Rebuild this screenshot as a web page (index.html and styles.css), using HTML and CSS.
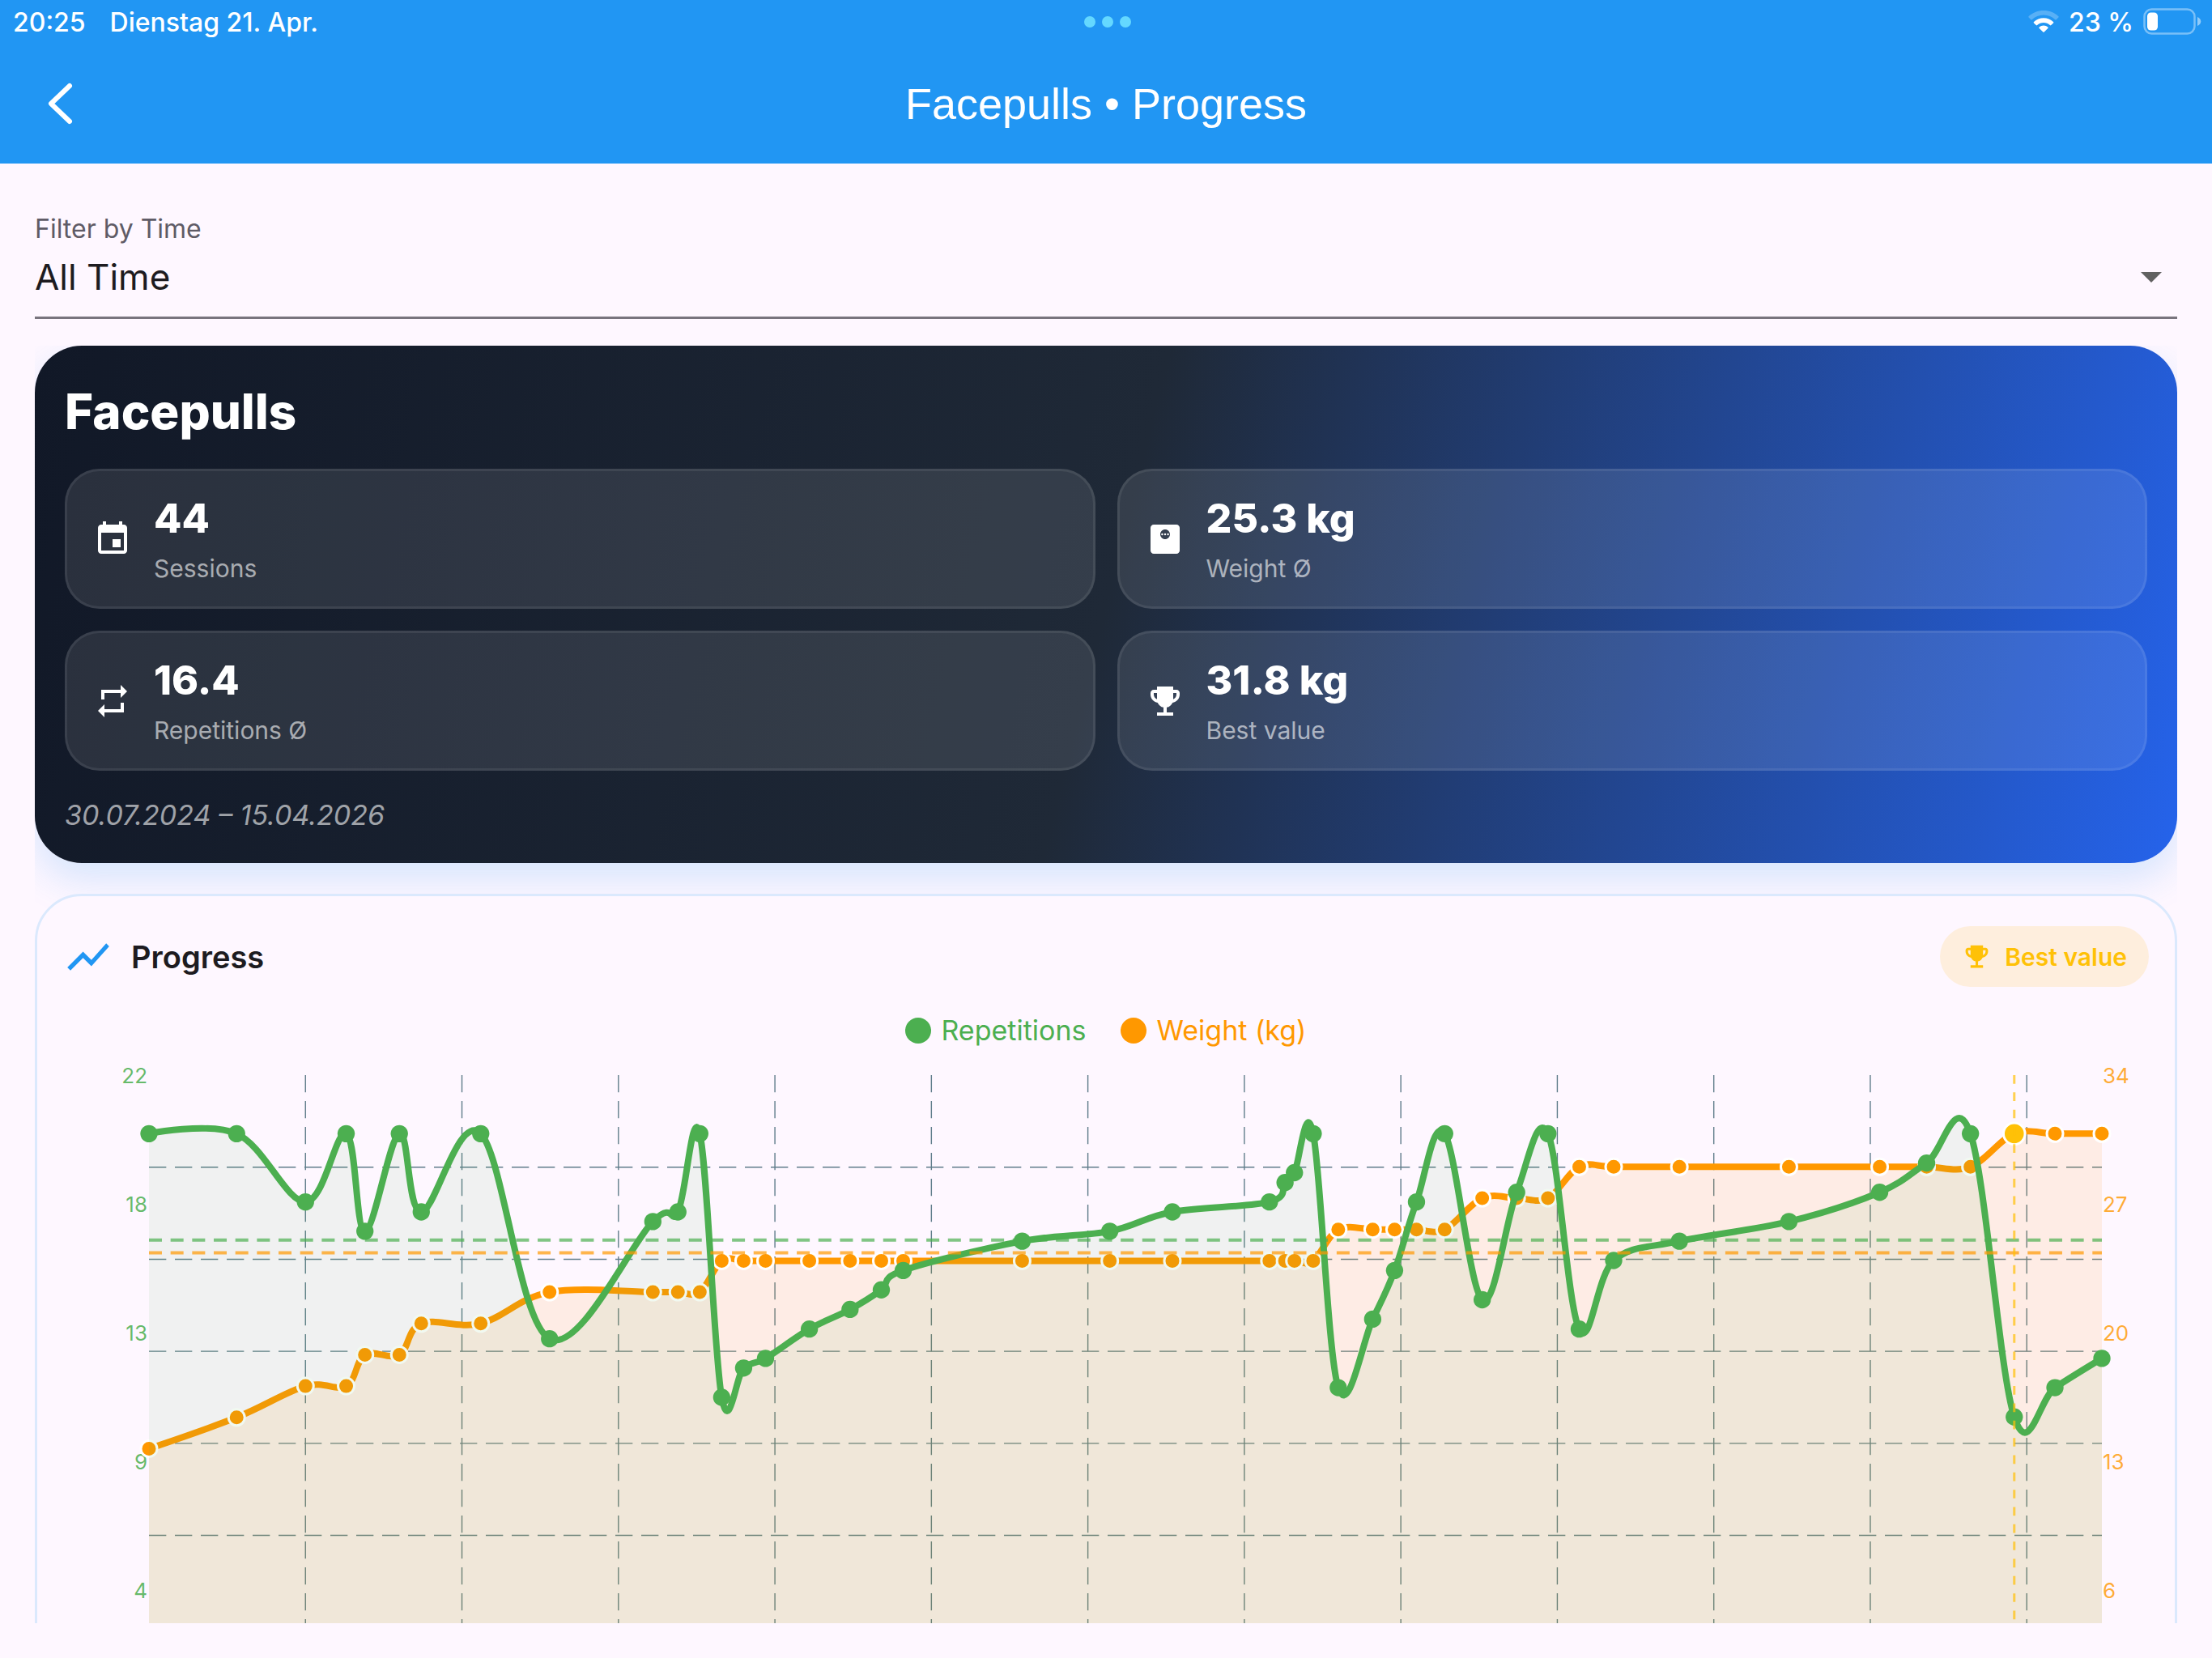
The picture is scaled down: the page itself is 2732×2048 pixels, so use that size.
FILE: index.html
```html
<!DOCTYPE html>
<html lang="en">
<head>
  <meta charset="UTF-8">
  <meta name="viewport" content="width=device-width, initial-scale=1.0">
  <title>Facepulls • Progress</title>
  <link rel="stylesheet" href="styles.css">
</head>
<body>
  <header class="top-bar">
    <div class="status-bar">
      <div class="status-left">
        <span>20:25</span>
        <span lang="de">Dienstag 21. Apr.</span>
      </div>
      <div class="status-dots">
        <i></i><i></i><i></i>
      </div>
      <div class="status-right">
        <svg width="38" height="28" viewBox="0 0 38 28" fill="#fff">
          <path opacity=".25" d="M19 0C11.800 0 5.300 2.700 .700 7.100a1 1 0 0 0 0 1.500l2.600 2.600a1 1 0 0 0 1.400 0C8.500 7.700 13.500 5.600 19 5.600s10.500 2.100 14.300 5.600a1 1 0 0 0 1.400 0l2.600-2.600a1 1 0 0 0 0-1.500C32.700 2.700 26.200 0 19 0z"/>
          <path d="M19 9.200c-4.600 0-8.800 1.800-12 4.700a1 1 0 0 0 0 1.500l2.700 2.700a1 1 0 0 0 1.400 0c2.100-1.900 4.900-3 7.900-3s5.800 1.100 7.900 3a1 1 0 0 0 1.400 0l2.700-2.700a1 1 0 0 0 0-1.500c-3.200-2.900-7.400-4.700-12-4.700z"/>
          <path d="M19 18.400c-2 0-3.900.8-5.300 2a1 1 0 0 0 0 1.500l4.600 4.600a1 1 0 0 0 1.400 0l4.600-4.600a1 1 0 0 0 0-1.500c-1.400-1.200-3.300-2-5.300-2z"/>
        </svg>
        <span>23 %</span>
        <svg width="72" height="34" viewBox="0 0 72 34">
          <rect x="1.500" y="1.500" width="62" height="30" rx="9" fill="none" stroke="#fff" stroke-opacity=".4" stroke-width="2.500"/>
          <rect x="5" y="5.500" width="13" height="22" rx="4.500" fill="#fff"/>
          <path d="M67 11c2.500 1 4.300 3 4.300 5.500S69.500 21 67 22z" fill="#fff" fill-opacity=".5"/>
        </svg>
      </div>
    </div>
    <nav class="nav-bar">
      <button class="back-btn" aria-label="Back">
        <svg width="36" height="56" viewBox="0 0 36 56" fill="none" stroke="#fff" stroke-width="6" stroke-linecap="round" stroke-linejoin="round">
          <polyline points="30 6 7 28 30 50"/>
        </svg>
      </button>
      <h1>Facepulls • Progress</h1>
    </nav>
  </header>

  <main>
    <div class="filter">
      <label for="timeFilter">Filter by Time</label>
      <select id="timeFilter">
        <option>All Time</option>
      </select>
      <svg class="filter-arrow" width="26" height="13" viewBox="0 0 26 13"><path d="M0 0h26L13 13z" fill="#616161"/></svg>
    </div>

    <div class="scroller">
      <section class="summary">
        <h2>Facepulls</h2>
        <div class="stats">
          <div class="stat">
            <svg width="48" height="48" viewBox="0 0 24 24" fill="currentColor"><path d="M17 12h-5v5h5v-5zM16 1v2H8V1H6v2H5c-1.110 0-1.990.9-1.990 2L3 19c0 1.100.890 2 2 2h14c1.100 0 2-.9 2-2V5c0-1.100-.9-2-2-2h-1V1h-2zm3 18H5V8h14v11z"/></svg>
            <div>
              <strong>44</strong>
              <span>Sessions</span>
            </div>
          </div>
          <div class="stat">
            <svg width="48" height="48" viewBox="0 0 24 24" fill="currentColor"><path d="M19 3H5c-1.100 0-2 .9-2 2v14c0 1.100.9 2 2 2h14c1.100 0 2-.9 2-2V5c0-1.100-.9-2-2-2zm-7 9c-1.660 0-3-1.340-3-3s1.340-3 3-3 3 1.340 3 3-1.340 3-3 3z"/><circle cx="10.200" cy="9" r=".6"/><circle cx="12" cy="9" r=".6"/><circle cx="13.800" cy="9" r=".6"/></svg>
            <div>
              <strong>25.3 kg</strong>
              <span>Weight Ø</span>
            </div>
          </div>
          <div class="stat">
            <svg width="48" height="48" viewBox="0 0 24 24" fill="currentColor"><path d="M7 7h10v3l4-4-4-4v3H5v6h2V7zm10 10H7v-3l-4 4 4 4v-3h12v-6h-2v4z"/></svg>
            <div>
              <strong>16.4</strong>
              <span>Repetitions Ø</span>
            </div>
          </div>
          <div class="stat">
            <svg width="48" height="48" viewBox="0 0 24 24" fill="currentColor"><path d="M19 5h-2V3H7v2H5c-1.100 0-2 .9-2 2v1c0 2.550 1.920 4.630 4.390 4.940.630 1.500 1.980 2.630 3.610 2.960V19H7v2h10v-2h-4v-3.100c1.630-.330 2.980-1.460 3.610-2.960C19.080 12.630 21 10.550 21 8V7c0-1.100-.9-2-2-2zM5 8V7h2v3.820C5.840 10.400 5 9.300 5 8zm14 0c0 1.300-.840 2.400-2 2.820V7h2v1z"/></svg>
            <div>
              <strong>31.8 kg</strong>
              <span>Best value</span>
            </div>
          </div>
        </div>
        <p class="period">30.07.2024 – 15.04.2026</p>
      </section>

      <section class="progress">
        <div class="progress-header">
          <svg width="62" height="62" viewBox="0 0 24 24" fill="#2196f3"><path d="M3.500 18.490l6-6.010 4 4L22 6.920l-1.410-1.410-7.090 7.970-4-4L2 16.990z"/></svg>
          <h3>Progress</h3>
          <div class="chip">
            <svg width="37" height="37" viewBox="0 0 24 24" fill="currentColor"><path d="M19 5h-2V3H7v2H5c-1.100 0-2 .9-2 2v1c0 2.550 1.920 4.630 4.390 4.940.630 1.500 1.980 2.630 3.610 2.960V19H7v2h10v-2h-4v-3.100c1.630-.330 2.980-1.460 3.610-2.960C19.080 12.630 21 10.550 21 8V7c0-1.100-.9-2-2-2zM5 8V7h2v3.820C5.840 10.400 5 9.300 5 8zm14 0c0 1.300-.840 2.400-2 2.820V7h2v1z"/></svg>
            Best value
          </div>
        </div>
        <div class="legend">
          <span class="legend-reps">Repetitions</span>
          <span class="legend-weight">Weight (kg)</span>
        </div>
        <div class="chart">
          <div class="axis axis-left">
            <span>22</span><span>18</span><span>13</span><span>9</span><span>4</span>
          </div>
          <svg id="plot"></svg>
          <div class="axis axis-right">
            <span>34</span><span>27</span><span>20</span><span>13</span><span>6</span>
          </div>
        </div>
      </section>
    </div>
  </main>

  <script src="chart.js"></script>
</body>
</html>
```
FILE: styles.css
```css
:root {
  --blue: #2196f3;
  --green: #4caf50;
  --orange: #ff9800;
  --amber: #ffc107;
  --surface: #fef7ff;
  --text: #1d1b20;
}

* {
  margin: 0;
  padding: 0;
  box-sizing: border-box;
}

body {
  font-family: Inter, sans-serif;
  color: var(--text);
  background-color: var(--surface);
  height: 100vh;
  display: flex;
  flex-direction: column;
  overflow: hidden;
}

svg {
  flex-shrink: 0;
}

/* Top bar */
.top-bar {
  background-color: var(--blue);
  color: white;
}

.status-bar {
  display: grid;
  grid-template-columns: 1fr auto 1fr;
  align-items: center;
  height: 54px;
  padding: 0 13px 0 16px;
  font-size: 32px;
  font-weight: 500;
}

.status-left {
  display: flex;
  gap: 30px;
}

.status-dots {
  display: flex;
  gap: 8px;
}

.status-dots i {
  width: 14px;
  height: 14px;
  border-radius: 50%;
  background-color: #64d8ff;
}

.status-right {
  display: flex;
  align-items: center;
  justify-content: flex-end;
  gap: 12px;
}

.nav-bar {
  display: grid;
  grid-template-columns: 120px 1fr 120px;
  align-items: center;
  height: 148px;
}

.back-btn {
  display: flex;
  background: none;
  border: none;
  padding: 0 0 0 56px;
  cursor: pointer;
}

h1 {
  font-family: "Liberation Sans", Arial, sans-serif;
  font-size: 54px;
  font-weight: 400;
  text-align: center;
}

main {
  flex: 1;
  min-height: 0;
  display: flex;
  flex-direction: column;
  padding: 63px 43px 43px;
}

/* Time filter */
.filter {
  position: relative;
  display: flex;
  flex-direction: column;
  border-bottom: 3px solid #79747e;
  margin-bottom: 33px;
}

.filter label {
  font-size: 32px;
  line-height: 36px;
  color: #5f5b66;
}

.filter select {
  appearance: none;
  height: 90px;
  padding-bottom: 8px;
  border: none;
  background: none;
  font-family: inherit;
  font-size: 44px;
  color: var(--text);
}

.filter-arrow {
  position: absolute;
  right: 19px;
  bottom: 42px;
  pointer-events: none;
}

.scroller {
  flex: 1;
  min-height: 0;
  overflow-y: auto;
  scrollbar-width: none;
}

/* Summary card */
.summary {
  padding: 37px;
  border-radius: 58px;
  color: white;
  background: linear-gradient(104deg, #111827, #1f2937 50%, #2563eb);
  box-shadow: 0 21px 48px rgba(33, 150, 243, 0.18);
  margin-bottom: 38px;
}

.summary h2 {
  font-size: 60px;
  font-weight: 800;
  line-height: 88px;
  margin-bottom: 27px;
}

.stats {
  display: grid;
  grid-template-columns: 1fr 1fr;
  gap: 27px;
}

.stat {
  display: flex;
  align-items: center;
  gap: 27px;
  height: 173px;
  padding: 0 32px;
  border: 3px solid rgba(255, 255, 255, 0.08);
  border-radius: 43px;
  background-color: rgba(255, 255, 255, 0.1);
}

.stat div {
  display: flex;
  flex-direction: column;
  gap: 16px;
}

.stat strong {
  font-size: 50px;
  font-weight: 800;
  line-height: 56px;
}

.stat span {
  font-size: 30px;
  line-height: 36px;
  color: rgba(255, 255, 255, 0.6);
}

.period {
  margin-top: 32px;
  font-size: 34px;
  font-style: italic;
  line-height: 45px;
  color: rgba(255, 255, 255, 0.6);
}

/* Chart card */
.progress {
  padding: 37px 32px;
  border: 3px solid #dbe9fd;
  border-radius: 58px;
  background-color: var(--surface);
}

.progress-header {
  display: flex;
  align-items: center;
  gap: 22px;
  height: 75px;
}

h3 {
  font-size: 38px;
  font-weight: 600;
}

.chip {
  display: flex;
  align-items: center;
  gap: 16px;
  height: 75px;
  margin-left: auto;
  padding: 0 27px;
  border-radius: 38px;
  background-color: #feeedd;
  color: var(--amber);
  font-size: 30px;
  font-weight: 600;
}

.legend {
  display: flex;
  justify-content: center;
  gap: 43px;
  margin: 36px 0 37px;
  font-size: 34px;
  line-height: 36px;
}

.legend span {
  display: flex;
  align-items: center;
  gap: 12px;
}

.legend span::before {
  content: "";
  width: 32px;
  height: 32px;
  border-radius: 50%;
  background-color: currentColor;
}

.legend-reps {
  color: var(--green);
}

.legend-weight {
  color: var(--orange);
}

.chart {
  display: grid;
  grid-template-columns: 106px 1fr 58px;
}

.axis {
  display: flex;
  flex-direction: column;
  margin-top: -15px;
  font-size: 26px;
  line-height: 32px;
}

.axis span {
  height: 159px;
}

.axis-left {
  text-align: right;
  padding-right: 2px;
  color: rgba(76, 175, 80, 0.85);
}

.axis-right {
  padding-left: 1px;
  color: rgba(255, 152, 0, 0.8);
}

#plot {
  width: 100%;
  height: 796px;
  overflow: visible;
}

/* Plot marks */
.grid-line {
  stroke: #607d8b;
  stroke-width: 1.4;
  stroke-dasharray: 21.33 10.67;
}

.area-reps {
  fill: rgba(76, 175, 80, 0.08);
}

.area-weight {
  fill: rgba(255, 152, 0, 0.1);
}

.line {
  fill: none;
  stroke-width: 8;
  stroke-linecap: round;
}

.line-reps {
  stroke: var(--green);
}

.line-weight {
  stroke: var(--orange);
}

.dot-reps {
  fill: var(--green);
}

.dot-weight,
.dot-best {
  fill: var(--orange);
  stroke: white;
  stroke-width: 3;
}

.dot-best {
  fill: var(--amber);
}

.average {
  stroke-width: 4;
  stroke-dasharray: 16 10.67;
  stroke-opacity: 0.7;
}

.average-reps {
  stroke: var(--green);
}

.average-weight {
  stroke: var(--orange);
}

.best-line {
  stroke: var(--amber);
  stroke-width: 3;
  stroke-dasharray: 10.67;
  stroke-opacity: 0.7;
}
```
FILE: chart.js
```js
// [day since first session, repetitions, weight in kg]
const sessions = [
  [0, 20, 14.7], [28, 20, 16.4], [50, 17.67, 18.1], [63, 20, 18.1],
  [69, 16.67, 19.8], [80, 20, 19.8], [87, 17.33, 21.5], [106, 20, 21.5],
  [128, 13, 23.2], [161, 17, 23.2], [169, 17.33, 23.2], [176, 20, 23.2],
  [183, 11, 24.9], [190, 12, 24.9], [197, 12.33, 24.9], [211, 13.33, 24.9],
  [224, 14, 24.9], [234, 14.67, 24.9], [241, 15.33, 24.9], [279, 16.33, 24.9],
  [307, 16.67, 24.9], [327, 17.33, 24.9], [358, 17.67, 24.9], [363, 18.33, 24.9],
  [366, 18.67, 24.9], [372, 20, 24.9], [380, 11.33, 26.6], [391, 13.67, 26.6],
  [398, 15.33, 26.6], [405, 17.67, 26.6], [414, 20, 26.6], [426, 14.33, 28.3],
  [437, 18, 28.3], [447, 20, 28.3], [457, 13.33, 30], [468, 15.67, 30],
  [489, 16.33, 30], [524, 17, 30], [553, 18, 30], [568, 19, 30],
  [582, 20, 30], [596, 10.33, 31.8], [609, 11.33, 31.8], [624, 12.33, 31.8]
];

const maxDay = 624;
const maxReps = 22;
const maxWeight = 34.98;
const bestIndex = 41;
const svg = document.getElementById('plot');

function add(name, className, attrs) {
  const el = document.createElementNS('http://www.w3.org/2000/svg', name);
  el.setAttribute('class', className);
  for (const key in attrs) {
    el.setAttribute(key, attrs[key]);
  }
  svg.appendChild(el);
}

function curve(points) {
  let d = `M${points[0].x} ${points[0].y}`;
  let tx = 0;
  let ty = 0;
  for (let i = 1; i < points.length; i++) {
    const prev = points[i - 1];
    const cur = points[i];
    const next = points[i + 1] || cur;
    const c1 = `${prev.x + tx} ${prev.y + ty}`;
    tx = (next.x - prev.x) / 2 * 0.35;
    ty = (next.y - prev.y) / 2 * 0.35;
    d += `C${c1} ${cur.x - tx} ${cur.y - ty} ${cur.x} ${cur.y}`;
  }
  return d;
}

function average(column) {
  return sessions.reduce((sum, s) => sum + s[column], 0) / sessions.length;
}

function draw() {
  const w = svg.clientWidth;
  const h = svg.clientHeight;
  const series = (column, max) => sessions.map(s => ({ x: s[0] / maxDay * w, y: h - s[column] / max * h }));
  const reps = series(1, maxReps);
  const weight = series(2, maxWeight);
  svg.innerHTML = '';

  for (let day = 50; day < maxDay; day += 50) {
    const x = day / maxDay * w;
    add('line', 'grid-line', { x1: x, x2: x, y1: 0, y2: h });
  }
  for (let i = 1; i < 7; i++) {
    const y = i / 7 * h;
    add('line', 'grid-line', { x1: 0, x2: w, y1: y, y2: y });
  }

  add('path', 'area-weight', { d: curve(weight) + `V${h}H0Z` });
  add('path', 'line line-weight', { d: curve(weight) });
  weight.forEach((p, i) => {
    const best = i === bestIndex;
    add('circle', best ? 'dot-best' : 'dot-weight', { cx: p.x, cy: p.y, r: best ? 13.3 : 10 });
  });

  add('path', 'area-reps', { d: curve(reps) + `V${h}H0Z` });
  add('path', 'line line-reps', { d: curve(reps) });
  reps.forEach(p => add('circle', 'dot-reps', { cx: p.x, cy: p.y, r: 10.67 }));

  const repsY = h - average(1) / maxReps * h;
  const weightY = h - average(2) / maxWeight * h;
  add('line', 'average average-reps', { x1: 0, x2: w, y1: repsY, y2: repsY });
  add('line', 'average average-weight', { x1: 0, x2: w, y1: weightY, y2: weightY });
  add('line', 'best-line', { x1: weight[bestIndex].x, x2: weight[bestIndex].x, y1: 0, y2: h });
}

draw();
window.addEventListener('resize', draw);
```
